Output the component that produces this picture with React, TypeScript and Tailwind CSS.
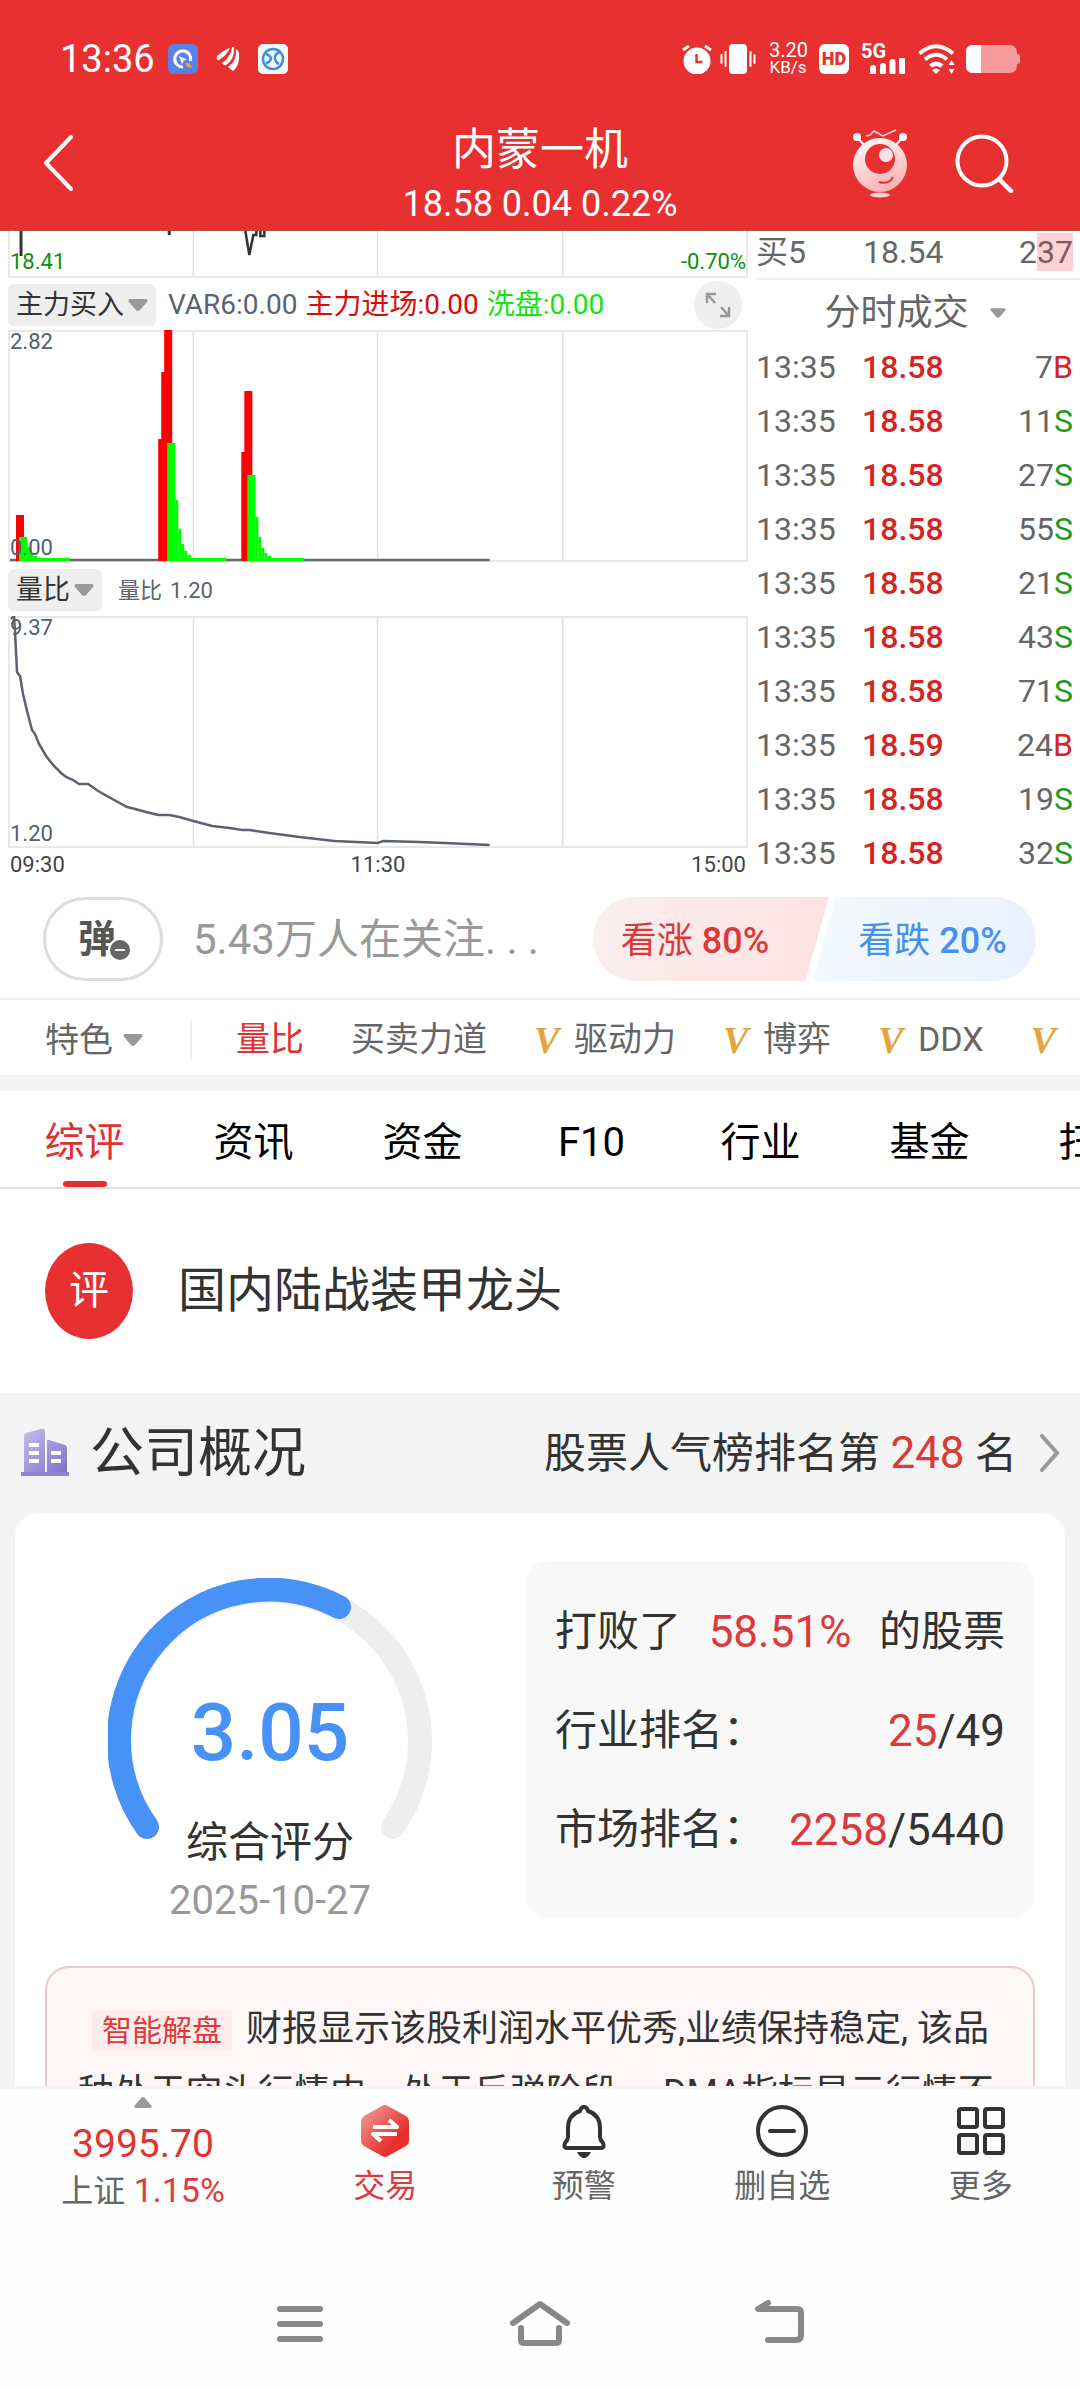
import type { ReactNode } from 'react'

const trades = [
  { time: '13:35', price: '18.58', volume: 7, side: 'B' },
  { time: '13:35', price: '18.58', volume: 11, side: 'S' },
  { time: '13:35', price: '18.58', volume: 27, side: 'S' },
  { time: '13:35', price: '18.58', volume: 55, side: 'S' },
  { time: '13:35', price: '18.58', volume: 21, side: 'S' },
  { time: '13:35', price: '18.58', volume: 43, side: 'S' },
  { time: '13:35', price: '18.58', volume: 71, side: 'S' },
  { time: '13:35', price: '18.59', volume: 24, side: 'B' },
  { time: '13:35', price: '18.58', volume: 19, side: 'S' },
  { time: '13:35', price: '18.58', volume: 32, side: 'S' },
]

const indicators = [
  { name: '量比', vip: false },
  { name: '买卖力道', vip: false },
  { name: '驱动力', vip: true },
  { name: '博弈', vip: true },
  { name: 'DDX', vip: true },
  { name: '', vip: true },
]

const tabs = ['综评', '资讯', '资金', 'F10', '行业', '基金', '扫雷']

// [x, width, height] in chart units, measured up from the base line
const redBars = [
  [8, 8, 46],
  [150, 4, 122],
  [153, 4, 189],
  [156, 8, 231],
  [233, 4, 109],
  [236, 8, 170],
]
const greenBars = [
  [11, 8, 24], [19, 3, 14], [22, 3, 8], [25, 4, 5], [29, 33, 3],
  [159, 8, 118], [167, 3, 61], [170, 3, 32], [173, 3, 17], [176, 3, 10], [179, 4, 6], [183, 35, 3],
  [239, 8, 86], [247, 3, 44], [250, 3, 24], [253, 3, 13], [256, 3, 8], [259, 4, 5], [263, 33, 3],
]

const ratioLine =
  '3,3 6,0 7,16 9,56 12,60 15,78 19,95 24,114 27,118 31,128 38,140 45,149 53,157 58,161 65,164 71,168 80,168 90,175 106,184 119,191 127,193 138,196 150,199 161,199 171,201 185,205 204,210 221,212 234,214 241,214 261,217 291,221 326,225 369,227 375,225 411,226 436,227 481,229'

function Triangle({ className }: { className?: string }) {
  return (
    <svg viewBox="0 0 20 12" className={className} aria-hidden="true">
      <path d="M2 0h16q2.500 .5 1 3l-7 8q-2 2-4 0l-7-8q-1.500-2.500 1-3z" fill="#999" />
    </svg>
  )
}

function Dropdown({ label, value }: { label: string; value: string }) {
  return (
    <label className="flex h-[42px] items-center gap-1 rounded-md bg-[#eee] px-2">
      <select aria-label={label} className="appearance-none bg-transparent text-[27px] leading-10 text-[#333]">
        <option>{value}</option>
      </select>
      <Triangle className="h-3 w-5" />
    </label>
  )
}

function Grid({ height, open }: { height: number; open?: boolean }) {
  return (
    <>
      {[185, 369, 554].map((x) => (
        <path key={x} d={`M${x} 0V${height}`} stroke="#e2e2e2" strokeWidth="1.500" />
      ))}
      <path
        d={open ? `M1 0V${height - 1}H738V0` : `M1 1V${height - 1}H738V1Z`}
        stroke="#e8e8e8"
        strokeWidth="2"
        fill="none"
      />
    </>
  )
}

function StatusBar() {
  return (
    <div className="flex h-[118px] items-center justify-between pr-[60px] pl-[60px] text-white">
      <div className="flex items-center">
        <span className="w-[108px] text-[38px]">13:36</span>
        <svg viewBox="0 0 30 30" className="h-[30px] w-[30px]">
          <rect width="30" height="30" rx="6" fill="#5a82e6" />
          <path d="M15 23a8 8 0 1 1 7.500-6" fill="none" stroke="#fff" strokeWidth="3" />
          <path d="M11 12l8 3.500-3.500 1.500-1.500 3.500z" fill="#fff" />
          <path d="M17 19l5 0 2 5-5-1z" fill="#d9a54a" />
        </svg>
        <svg viewBox="0 0 24 26" className="ml-[18px] h-[26px] w-6">
          <path d="M1 10Q8 4 14 2q-3 7-11 12Q0 15 1 10z" fill="#fff" />
          <path d="M16 1Q15 11 6 17q2 3 4 2Q19 13 18 1z" fill="#fff" />
          <path d="M20 3q1 12-8 18l5 4Q24 20 23 7q-1-3-3-4z" fill="#fff" />
        </svg>
        <svg viewBox="0 0 30 30" className="ml-[18px] h-[30px] w-[30px]">
          <rect width="30" height="30" rx="5" fill="#f6fafd" />
          <circle cx="15" cy="15" r="10" fill="none" stroke="#3f8fdd" strokeWidth="2.500" />
          <path d="M8 10q5 2 5 5-2 4-5 4M22 8q-6 2-5 7 1 4 4 5" fill="none" stroke="#3f8fdd" strokeWidth="2.500" />
        </svg>
      </div>
      <div className="flex items-center">
        <svg viewBox="0 0 30 30" className="h-[30px] w-[30px]">
          <circle cx="15" cy="17" r="13.500" fill="#fff" />
          <path d="M1 6l6-4M29 6l-6-4" stroke="#fff" strokeWidth="3" />
          <path d="M14.500 10v8h6" fill="none" stroke="#e83030" strokeWidth="2.500" />
        </svg>
        <svg viewBox="0 0 36 30" className="ml-2 h-[30px] w-9">
          <rect x="9" width="18" height="30" rx="4" fill="#fff" />
          <path d="M1.500 11v8M5.500 8v14M30.500 8v14M34.500 11v8" stroke="#fff" strokeWidth="2" strokeLinecap="round" />
        </svg>
        <div className="ml-[13px] w-[38px] text-center">
          <div className="text-[20px] leading-[17px]">3.20</div>
          <div className="text-[17px] leading-[17px]">KB/s</div>
        </div>
        <span className="ml-3 h-[30px] w-[30px] rounded-md bg-white text-center text-[18px] leading-[30px] font-black text-[#e83030]">
          HD
        </span>
        <div className="ml-3 h-[30px] w-[46px]">
          <div className="text-[20px] leading-[14px] font-bold">5G</div>
          <svg viewBox="0 0 46 16" className="h-4 w-[46px]">
            <path d="M12 10v4M22 8v6M31.500 4v10M41 2v12" stroke="#fff" strokeWidth="6" strokeLinecap="round" />
          </svg>
        </div>
        <svg viewBox="0 0 37 30" className="ml-[11px] h-[30px] w-[37px]">
          <path d="M1.500 9.500Q18 -5 35 9.500M7 15.500q11-9.500 22 0" fill="none" stroke="#fff" strokeWidth="4" />
          <path d="M11 20.500q7-6 14.500 0l-3 3q-4-3-8.500 0z" fill="#fff" />
          <path d="M14 26q4-3 8 0l-4 4z" fill="#fff" />
          <path d="M33.500 16l3 5h-6zM33.500 30l3-5h-6z" fill="#fff" />
        </svg>
        <svg viewBox="0 0 54 28" className="ml-[11px] h-7 w-[54px]">
          <rect width="51" height="28" rx="7" fill="#f69a9a" />
          <rect x="50" y="9" width="4" height="10" rx="2" fill="#f69a9a" />
          <path d="M15 0v28H7q-7 0-7-7V7q0-7 7-7z" fill="#fff" />
        </svg>
      </div>
    </div>
  )
}

function Header() {
  return (
    <header className="shrink-0 border-b border-[#a85050] bg-[#e83030] text-white">
      <StatusBar />
      <div className="flex h-28 items-start justify-between px-9">
        <button aria-label="返回" className="flex h-[90px] w-[200px] items-center">
          <svg viewBox="0 0 44 60" className="h-[60px] w-11">
            <path d="M35 4L10 30l25 26" fill="none" stroke="#fff" strokeWidth="4" strokeLinecap="round" strokeLinejoin="round" />
          </svg>
        </button>
        <div className="flex flex-col gap-1 pt-1.5 text-center">
          <h1 className="text-[44px] leading-[52px]">内蒙一机</h1>
          <p className="text-[36px] leading-[48px]">18.58 0.04 0.22%</p>
        </div>
        <div className="flex h-[90px] w-[200px] items-center justify-end gap-[46px] pr-[30px]">
          <button aria-label="智能助手">
            <svg viewBox="0 0 56 70" className="h-[70px] w-14">
              <defs>
                <linearGradient id="robot" x1="0" y1="0" x2="0.4" y2="1">
                  <stop offset="0" stopColor="#fff" />
                  <stop offset="1" stopColor="#fbb4b4" />
                </linearGradient>
              </defs>
              <path d="M5 9l8 9M51 9l-8 9" stroke="#fff" strokeWidth="2" />
              <circle cx="5" cy="9" r="4" fill="#fff" />
              <circle cx="51" cy="9" r="4" fill="#fff" />
              <path d="M14 8l4-1 4-4 9 5 13-6" fill="none" stroke="#fcd0d0" strokeWidth="1.500" />
              <ellipse cx="28" cy="37" rx="27" ry="27" fill="url(#robot)" />
              <circle cx="28" cy="31" r="15" fill="#e83030" />
              <circle cx="34" cy="27" r="7" fill="#fde0e0" />
              <path d="M27 54q10 3 14-5" fill="none" stroke="#e83030" strokeWidth="2" />
              <ellipse cx="28" cy="67" rx="10" ry="2.500" fill="#fbd0d0" />
            </svg>
          </button>
          <button aria-label="搜索">
            <svg viewBox="0 0 60 60" className="h-[60px] w-[60px]">
              <circle cx="28" cy="28" r="24.500" fill="none" stroke="#fff" strokeWidth="4" />
              <path d="M45 46l12 12" stroke="#fff" strokeWidth="4.500" strokeLinecap="round" />
            </svg>
          </button>
        </div>
      </div>
    </header>
  )
}

function Charts() {
  return (
    <div className="min-w-0 flex-1 px-2">
      <div className="relative h-[47px]">
        <svg viewBox="0 0 739 47" preserveAspectRatio="none" className="h-full w-full">
          <Grid height={47} open />
          <path d="M13 0v25M161 0v4" stroke="#333" strokeWidth="3" />
          <path d="M237 0l4 24 4-20h3V0M252 0v5h4V0" fill="none" stroke="#333" strokeWidth="2.500" />
        </svg>
        <span className="absolute bottom-1 left-0.5 text-[22px] leading-6 text-[#0b910b]">18.41</span>
        <span className="absolute right-0.5 bottom-1 text-[22px] leading-6 text-[#0b910b]">-0.70%</span>
      </div>

      <div className="flex h-[52px] items-center pt-0.5 text-[28px]">
        <Dropdown label="副图指标一" value="主力买入" />
        <p className="ml-3 flex flex-1 gap-2 whitespace-nowrap">
          <span className="text-[#5b6370]">VAR6:0.00</span>
          <span className="text-[#dd0a0a]">主力进场:0.00</span>
          <span className="text-[#12e512]">洗盘:0.00</span>
        </p>
        <button aria-label="全屏" className="mr-1.5 flex h-12 w-12 items-center justify-center rounded-full bg-[#efefef]">
          <svg viewBox="0 0 26 26" className="h-[26px] w-[26px]">
            <path d="M2 11V2h9M2 2l8 9M24 15v9h-9M24 24l-8-9" fill="none" stroke="#999" strokeWidth="2.500" />
          </svg>
        </button>
      </div>

      <div className="relative h-[232px]">
        <svg viewBox="0 0 739 232" preserveAspectRatio="none" className="h-full w-full">
          <Grid height={232} />
          <path d="M2 230H481" stroke="#666c76" strokeWidth="2.500" />
          {redBars.map(([x, w, h]) => (
            <rect key={x} x={x} y={231 - h} width={w} height={h} fill="#ff0000" />
          ))}
          {greenBars.map(([x, w, h]) => (
            <rect key={x} x={x} y={231 - h} width={w} height={h} fill="#00ff00" />
          ))}
        </svg>
        <span className="absolute top-0 left-0.5 text-[22px] leading-6 text-[#50606f]">2.82</span>
        <span className="absolute bottom-0.5 left-0.5 text-[22px] leading-6 text-[#50606f]">0.00</span>
      </div>

      <div className="flex h-[54px] items-center pt-0.5">
        <Dropdown label="副图指标二" value="量比" />
        <p className="ml-4 flex gap-2 text-[22px] text-[#5b6370]">
          <span>量比</span>
          <span>1.20</span>
        </p>
      </div>

      <div className="relative h-[232px]">
        <svg viewBox="0 0 739 232" preserveAspectRatio="none" className="h-full w-full">
          <Grid height={232} />
          <polyline points={ratioLine} fill="none" stroke="#5b6370" strokeWidth="2.500" />
        </svg>
        <span className="absolute top-0 left-0.5 text-[22px] leading-6 text-[#50606f]">9.37</span>
        <span className="absolute bottom-0.5 left-0.5 text-[22px] leading-6 text-[#50606f]">1.20</span>
      </div>

      <div className="flex h-8 items-center justify-between px-0.5 text-[22px] text-[#444]">
        <span>09:30</span>
        <span>11:30</span>
        <span>15:00</span>
      </div>
    </div>
  )
}

function TradeList() {
  return (
    <div className="w-[324px] shrink-0 text-[32px] text-[#666]">
      <div className="flex h-[49px] border-b-2 border-[#eee] leading-[42px]">
        <span className="w-[107px]">买5</span>
        <span className="flex-1">18.54</span>
        <span className="pr-[7px]">
          2<span className="bg-[#f9d3d3] text-[#85565a]">37</span>
        </span>
      </div>
      <label className="flex h-[60px] items-center justify-center gap-5 pt-1.5 pr-1.5">
        <select aria-label="明细类型" className="appearance-none bg-transparent text-[36px] leading-[52px]">
          <option>分时成交</option>
        </select>
        <Triangle className="h-2.5 w-4" />
      </label>
      <table className="w-full">
        <tbody>
          {trades.map((trade, index) => (
            <tr key={index} className="h-[54px] leading-[54px]">
              <td className="w-[106px] p-0">{trade.time}</td>
              <td className="p-0 font-medium text-[#d42424]">{trade.price}</td>
              <td className="p-0 pr-[7px] text-right">
                {trade.volume}
                <span className={trade.side === 'B' ? 'text-[#d42424]' : 'text-[#1f9a1f]'}>{trade.side}</span>
              </td>
            </tr>
          ))}
        </tbody>
      </table>
    </div>
  )
}

function Sentiment() {
  return (
    <section className="flex h-[120px] items-center border-b-2 border-[#eee] pr-11 pl-[43px]">
      <button
        aria-label="关闭弹幕"
        className="relative flex h-[84px] w-[120px] items-center justify-center rounded-full border-[3px] border-[#ddd] pr-3 text-[38px] font-bold text-[#555]"
      >
        弹
        <svg viewBox="0 0 24 24" className="absolute right-7 bottom-4 h-6 w-6">
          <circle cx="12" cy="12" r="11" fill="#666" stroke="#fff" strokeWidth="2" />
          <path d="M7 12h10" stroke="#fff" strokeWidth="2" />
        </svg>
      </button>
      <p className="ml-[30px] flex-1 text-[42px] whitespace-nowrap text-[#999]">5.43万人在关注. . .</p>
      <div className="flex h-[84px] w-[443px] overflow-hidden rounded-full text-[36px]">
        <button className="h-full w-[236px] bg-linear-to-r from-[#faeeee] to-[#fde3e3] pt-1 pr-8 text-[#dc3a3a] [clip-path:polygon(0_0,100%_0,90%_100%,0_100%)]">
          看涨 <span className="font-medium">80%</span>
        </button>
        <button className="-ml-4 h-full flex-1 bg-linear-to-r from-[#f4f8fe] to-[#e8f2fe] pt-1 pl-4 text-[#4790ee] [clip-path:polygon(10%_0,100%_0,100%_100%,0_100%)]">
          看跌 <span className="font-medium">20%</span>
        </button>
      </div>
    </section>
  )
}

function IndicatorBar() {
  return (
    <nav className="flex h-[75px] items-center overflow-hidden pt-1 pl-[45px] text-[34px] whitespace-nowrap text-[#666]">
      <label className="flex w-[147px] shrink-0 items-center gap-2.5 border-r-2 border-[#eee]">
        <select aria-label="指标分类" className="appearance-none bg-transparent leading-10">
          <option>特色</option>
        </select>
        <Triangle className="h-3 w-5" />
      </label>
      <div className="ml-11 flex gap-[47px]">
        {indicators.map((item, index) => (
          <button
            key={index}
            aria-label={item.name || '更多指标'}
            className={index === 0 ? 'flex shrink-0 items-center text-[#e03232]' : 'flex shrink-0 items-center'}
          >
            {item.vip && (
              <span className="w-10 text-left font-['Liberation_Serif',serif] text-[38px] leading-10 font-bold text-[#e5a43c] italic">
                V
              </span>
            )}
            {item.name}
          </button>
        ))}
      </div>
    </nav>
  )
}

function Tabs() {
  return (
    <nav className="flex h-[98px] overflow-hidden border-b-2 border-[#e2e2e2] text-[40px] text-black">
      {tabs.map((tab, index) => (
        <a
          key={tab}
          href="#"
          className={
            index === 0
              ? 'flex w-[169px] shrink-0 flex-col items-center justify-between pt-[22px] leading-[60px] text-[#e03232]'
              : 'flex w-[169px] shrink-0 flex-col items-center pt-[22px] leading-[60px]'
          }
        >
          {tab}
          {index === 0 && <span className="h-1.5 w-11 rounded-sm bg-[#e03232]" />}
        </a>
      ))}
    </nav>
  )
}

function ScoreGauge() {
  return (
    <div className="grid justify-items-center">
      <svg viewBox="0 0 324 264" className="col-start-1 row-start-1 mt-[17px] h-[264px] w-[324px]">
        <path d="M39 249A150 150 0 1 1 285 249" fill="none" stroke="#eee" strokeWidth="24" strokeLinecap="round" />
        <path d="M39 249A150 150 0 0 1 231 29" fill="none" stroke="#4791f7" strokeWidth="24" strokeLinecap="round" />
      </svg>
      <div className="col-start-1 row-start-1 pt-[124px] text-center">
        <div className="text-[80px] leading-[96px] font-medium text-[#4791f7]">3.05</div>
        <div className="mt-8 text-[42px] leading-[60px] text-[#333]">综合评分</div>
        <div className="text-[40px] leading-[56px] text-[#999]">2025-10-27</div>
      </div>
    </div>
  )
}

function RankRow({ label, rank, total }: { label: string; rank: string; total: string }) {
  return (
    <div className="flex h-[99px] items-center justify-between">
      <span>{label}：</span>
      <span className="text-[44px]">
        <span className="text-[#dc3a3a]">{rank}</span>/{total}
      </span>
    </div>
  )
}

function Company() {
  return (
    <section className="bg-[#f4f4f4] px-[15px] text-[#333]">
      <div className="flex h-[120px] items-center">
        <svg viewBox="0 0 50 50" className="ml-1.5 h-[50px] w-[50px]">
          <defs>
            <linearGradient id="building" x1="0" y1="0" x2="1" y2="1">
              <stop offset="0" stopColor="#c5bfec" />
              <stop offset="1" stopColor="#7d70cb" />
            </linearGradient>
          </defs>
          <path d="M3 8q0-2 2-3l15-4q4-1 4 3v41H3zM26 13q0-2 2-1l16 5q2 1 2 3v25H26z" fill="url(#building)" />
          <path d="M0 44h48v4H0z" fill="#8e83d3" />
          <path d="M8 15h10v4H8zM8 23h10v4H8zM8 31h10v4H8zM30 23h10v4H30zM30 31h10v4H30z" fill="#fff" />
        </svg>
        <h2 className="ml-[19px] flex-1 text-[54px]">公司概况</h2>
        <a href="#" className="flex items-center text-[42px]">
          <span>
            股票人气榜排名第 <span className="text-[44px] text-[#dc3a3a]">248</span> 名
          </span>
          <svg viewBox="0 0 22 40" className="mr-1 ml-[22px] h-10 w-[22px]">
            <path d="M3 3l15 17L3 37" fill="none" stroke="#999" strokeWidth="4" strokeLinecap="round" />
          </svg>
        </a>
      </div>

      <div className="rounded-t-3xl bg-white pt-12">
        <div className="grid grid-cols-2 items-start pr-[30px]">
          <ScoreGauge />
          <div className="rounded-3xl bg-[#f8f8f8] px-[30px] pt-[21px] pb-[38px] text-[42px]">
            <div className="flex h-[99px] items-center justify-between">
              <span>打败了</span>
              <span className="text-[44px] text-[#dc3a3a]">58.51%</span>
              <span>的股票</span>
            </div>
            <RankRow label="行业排名" rank="25" total="49" />
            <RankRow label="市场排名" rank="2258" total="5440" />
          </div>
        </div>

        <div className="mx-[30px] mt-[37px] rounded-t-3xl border-2 border-b-0 border-[#ecc9c9] bg-[#fdf7f7] px-[31px] pt-[29px]">
          <p className="text-[36px] leading-[64px]">
            <span className="mr-[14px] ml-[14px] inline-block h-10 bg-[#fdecec] px-2.5 text-[30px] leading-10 text-[#dc3a3a]">
              智能解盘
            </span>
            财报显示该股利润水平优秀,业绩保持稳定, 该品种处于空头行情中，处于反弹阶段。 DMA指标显示行情不
          </p>
        </div>
      </div>
    </section>
  )
}

function NavButton({ label, active, children }: { label: string; active?: boolean; children: ReactNode }) {
  return (
    <button
      className={
        active
          ? 'flex flex-1 flex-col items-center text-[32px] leading-[48px] text-[#d93c3c]'
          : 'flex flex-1 flex-col items-center text-[32px] leading-[48px] text-[#666]'
      }
    >
      <svg viewBox="0 0 54 54" className="mt-[15px] mb-1 h-[54px] w-[54px]" fill="none" stroke="#333" strokeWidth="4">
        {children}
      </svg>
      {label}
    </button>
  )
}

function BottomBar() {
  return (
    <footer className="shrink-0 border-t-[3px] border-[#f4f4f4] bg-[#fefefe]">
      <div className="flex h-[171px] items-start">
        <a href="#" className="flex w-[286px] flex-col items-center">
          <Triangle className="mt-2 h-[11px] w-[18px] rotate-180" />
          <span className="mt-3 text-[39px] leading-[48px] text-[#e33232]">3995.70</span>
          <span className="text-[34px] leading-[44px] text-[#666]">
            <span className="text-[32px]">上证</span> <span className="text-[#e03a3a]">1.15%</span>
          </span>
        </a>
        <NavButton label="交易" active>
          <defs>
            <linearGradient id="hexagon" x1="0" y1="0" x2="1" y2="1">
              <stop offset="0" stopColor="#f4a3a3" />
              <stop offset="0.7" stopColor="#e83030" />
            </linearGradient>
          </defs>
          <path d="M24 2q3-2 6 0l18 10q3 2 3 5v20q0 3-3 5L30 52q-3 2-6 0L6 42q-3-2-3-5V17q0-3 3-5z" fill="url(#hexagon)" stroke="none" />
          <path d="M15 23h24l-8-7M39 30H15l8 7" stroke="#fff" strokeLinejoin="round" />
        </NavButton>
        <NavButton label="预警">
          <path d="M27 3q-3 0-4 4Q11 11 11 24v9q0 3-3 6-2 5 2 5h34q4 0 2-5-3-3-3-6v-9Q43 11 31 7q-1-4-4-4z" strokeLinejoin="round" />
          <path d="M20 48h14q-3 6-7 6t-7-6z" fill="#333" stroke="none" />
        </NavButton>
        <NavButton label="删自选">
          <circle cx="27" cy="27" r="24" />
          <path d="M15 27h24" strokeLinecap="round" />
        </NavButton>
        <NavButton label="更多">
          <rect x="5" y="5" width="18" height="18" rx="2" />
          <rect x="31" y="5" width="18" height="18" rx="2" />
          <rect x="5" y="31" width="18" height="18" rx="2" />
          <rect x="31" y="31" width="18" height="18" rx="2" />
        </NavButton>
      </div>

      <div className="flex h-32 items-center justify-center">
        <button aria-label="最近任务" className="flex w-60 justify-center">
          <svg viewBox="0 0 60 48" className="h-12 w-[60px]">
            <path d="M10 9h40M10 24h40M10 39h40" stroke="#888" strokeWidth="6" strokeLinecap="round" />
          </svg>
        </button>
        <button aria-label="主页" className="flex w-60 justify-center">
          <svg viewBox="0 0 60 48" className="h-12 w-[60px]">
            <path d="M3 23L30 4l27 19M11 28v12q0 3 3 3h32q3 0 3-3V28" fill="none" stroke="#888" strokeWidth="6" strokeLinecap="round" strokeLinejoin="round" />
          </svg>
        </button>
        <button aria-label="后退" className="flex w-60 justify-center">
          <svg viewBox="0 0 60 48" className="h-12 w-[60px]">
            <path d="M18 3L8 9h39q4 0 4 4v22q0 5-5 5H18" fill="none" stroke="#888" strokeWidth="6" strokeLinecap="round" strokeLinejoin="round" />
          </svg>
        </button>
      </div>
    </footer>
  )
}

export default function App() {
  return (
    <div className="flex h-screen flex-col bg-white font-['Roboto','Noto_Sans_CJK_SC',sans-serif]">
      <Header />
      <main className="min-h-0 flex-1 overflow-hidden">
        <section className="flex">
          <Charts />
          <TradeList />
        </section>
        <Sentiment />
        <IndicatorBar />
        <div className="h-4 bg-[#f4f4f4]" />
        <Tabs />
        <section className="flex h-[204px] items-center gap-[45px] pl-[45px]">
          <span className="flex h-24 w-[88px] items-center justify-center rounded-[50%] bg-[#e83030] text-[40px] text-white">
            评
          </span>
          <p className="text-[48px] text-[#333]">国内陆战装甲龙头</p>
        </section>
        <Company />
      </main>
      <BottomBar />
    </div>
  )
}
